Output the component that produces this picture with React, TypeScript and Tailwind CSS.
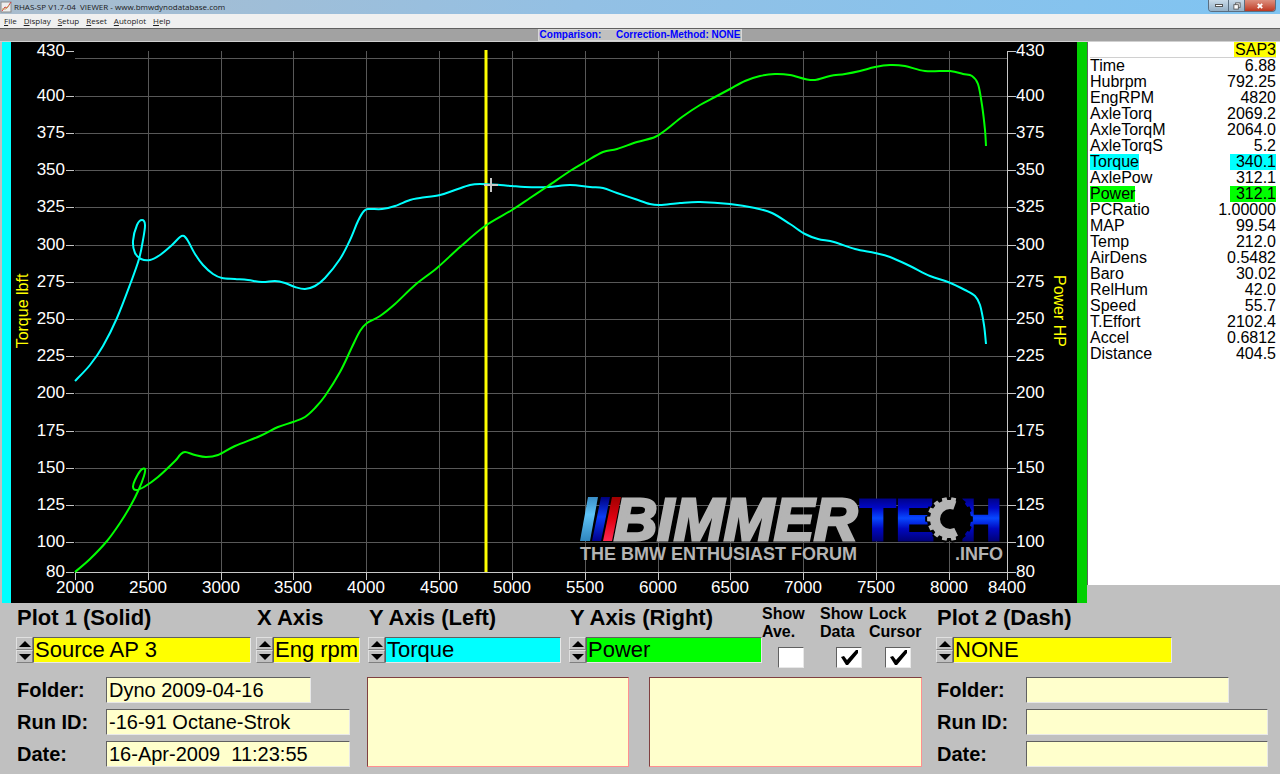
import { useId } from 'react';
import type { ReactNode } from 'react';
import clsx from 'clsx';

type Point = [number, number];

const PLOT = { left: 75, right: 1007, top: 51, bottom: 572 };
const RPM = { min: 2000, max: 8400 };
const LOAD = { min: 80, max: 430 };

const rpmTicks = [2000, 2500, 3000, 3500, 4000, 4500, 5000, 5500, 6000, 6500, 7000, 7500, 8000, 8400];
const loadTicks = [430, 400, 375, 350, 325, 300, 275, 250, 225, 200, 175, 150, 125, 100, 80];
const gridLoads = [425, 400, 375, 350, 325, 300, 275, 250, 225, 200, 175, 150, 125, 100];

const xOf = (rpm: number) =>
    Math.round(PLOT.left + ((rpm - RPM.min) * (PLOT.right - PLOT.left)) / (RPM.max - RPM.min));
const yOf = (load: number) =>
    Math.round(PLOT.bottom - ((load - LOAD.min) * (PLOT.bottom - PLOT.top)) / (LOAD.max - LOAD.min));

const torque: Point[] = [
    [75, 381], [90, 365], [103, 346], [117, 318], [131, 282], [139, 259], [143, 240], [145, 225], [142, 220],
    [137, 225], [133, 241], [135, 253], [141, 259], [150, 260], [160, 255], [172, 245], [180, 237], [184, 236],
    [188, 241], [195, 254], [203, 265], [213, 274], [222, 278], [235, 279], [248, 280], [262, 282], [275, 281],
    [285, 283], [295, 287], [305, 289], [315, 286], [325, 278], [340, 259], [350, 240], [358, 221], [364, 211],
    [369, 209], [382, 209], [395, 206], [410, 200], [420, 198], [440, 195], [455, 190], [470, 185], [480, 184],
    [500, 185], [512, 186], [525, 187], [548, 187], [570, 185], [590, 187], [603, 188], [617, 193], [635, 199],
    [650, 204], [660, 205], [680, 203], [700, 202], [730, 204], [755, 208], [772, 213], [790, 224], [805, 234],
    [818, 239], [834, 242], [855, 249], [875, 253], [890, 257], [910, 266], [930, 276], [948, 282], [965, 290],
    [975, 296], [980, 305], [984, 325], [986, 344],
];

const power: Point[] = [
    [75, 572], [90, 559], [107, 541], [120, 523], [131, 505], [139, 489], [144, 476], [145, 469], [141, 470],
    [135, 480], [133, 487], [136, 490], [144, 487], [158, 477], [175, 461], [180, 455], [185, 452], [195, 455],
    [206, 457], [218, 455], [235, 446], [260, 436], [278, 427], [293, 422], [305, 417], [315, 408], [325, 396],
    [340, 372], [352, 347], [360, 331], [367, 323], [380, 316], [395, 304], [415, 285], [437, 268], [460, 247],
    [485, 226], [512, 210], [530, 198], [548, 186], [570, 171], [585, 162], [603, 152], [617, 149], [637, 142],
    [655, 137], [667, 129], [682, 117], [700, 105], [715, 97], [730, 89], [745, 81], [760, 76], [775, 74],
    [790, 75], [805, 79], [815, 80], [830, 76], [845, 74], [860, 71], [875, 67], [890, 65], [905, 66], [925, 71],
    [950, 71], [963, 74], [972, 76], [978, 84], [982, 105], [985, 130], [986, 146],
];

const readings = [
    { name: 'Time', value: '6.88' },
    { name: 'Hubrpm', value: '792.25' },
    { name: 'EngRPM', value: '4820' },
    { name: 'AxleTorq', value: '2069.2' },
    { name: 'AxleTorqM', value: '2064.0' },
    { name: 'AxleTorqS', value: '5.2' },
    { name: 'Torque', value: '340.1', mark: 'bg-[#00ffff]' },
    { name: 'AxlePow', value: '312.1' },
    { name: 'Power', value: '312.1', mark: 'bg-[#00ff00]' },
    { name: 'PCRatio', value: '1.00000' },
    { name: 'MAP', value: '99.54' },
    { name: 'Temp', value: '212.0' },
    { name: 'AirDens', value: '0.5482' },
    { name: 'Baro', value: '30.02' },
    { name: 'RelHum', value: '42.0' },
    { name: 'Speed', value: '55.7' },
    { name: 'T.Effort', value: '2102.4' },
    { name: 'Accel', value: '0.6812' },
    { name: 'Distance', value: '404.5' },
];

// Catmull-Rom through the samples
const smooth = (pts: Point[]) => {
    let d = `M${pts[0][0]} ${pts[0][1]}`;
    for (let i = 0; i < pts.length - 1; i++) {
        const p0 = pts[i - 1] ?? pts[i];
        const p1 = pts[i];
        const p2 = pts[i + 1];
        const p3 = pts[i + 2] ?? p2;
        d += `C${p1[0] + (p2[0] - p0[0]) / 6} ${p1[1] + (p2[1] - p0[1]) / 6} ${p2[0] - (p3[0] - p1[0]) / 6} ${p2[1] - (p3[1] - p1[1]) / 6} ${p2[0]} ${p2[1]}`;
    }
    return d;
};

const gear = (cx: number, cy: number, outer: number, root: number, teeth: number) => {
    const pts: string[] = [];
    const step = (Math.PI * 2) / teeth;
    for (let i = 0; i < teeth; i++) {
        const a = i * step;
        const corners: Point[] = [[-0.3, root], [-0.24, outer], [0.24, outer], [0.3, root]];
        corners.forEach(([f, r]) => {
            pts.push(`${cx + r * Math.cos(a + f * step)},${cy + r * Math.sin(a + f * step)}`);
        });
    }
    return pts.join(' ');
};

const Logo = () => (
    <g>
        <defs>
            <linearGradient id="stripeSky" x1="0" y1="0" x2="0" y2="1">
                <stop offset="0" stopColor="#3a8fc8" />
                <stop offset="0.4" stopColor="#5fc4f8" />
                <stop offset="1" stopColor="#2f86be" />
            </linearGradient>
            <linearGradient id="stripeBlue" x1="0" y1="0" x2="0" y2="1">
                <stop offset="0" stopColor="#000080" />
                <stop offset="0.45" stopColor="#0a3cf5" />
                <stop offset="1" stopColor="#00008c" />
            </linearGradient>
            <linearGradient id="stripeRed" x1="0" y1="0" x2="0" y2="1">
                <stop offset="0" stopColor="#a00000" />
                <stop offset="0.5" stopColor="#e00010" />
                <stop offset="1" stopColor="#ff2850" />
            </linearGradient>
            <linearGradient id="techBlue" gradientUnits="userSpaceOnUse" x1="0" y1="497" x2="0" y2="541">
                <stop offset="0" stopColor="#000080" />
                <stop offset="0.25" stopColor="#0008c8" />
                <stop offset="0.48" stopColor="#0848ff" />
                <stop offset="0.72" stopColor="#0008c0" />
                <stop offset="1" stopColor="#000078" />
            </linearGradient>
            <mask id="openGear" maskUnits="userSpaceOnUse" x="920" y="490" width="60" height="60">
                <rect x="920" y="490" width="60" height="60" fill="#fff" />
                <circle cx="950" cy="519" r="10" fill="#000" />
                <polygon points="950,519 959,494 980,494 980,544 962,544" fill="#000" />
            </mask>
        </defs>
        <polygon points="588,497 598,497 590,541 580,541" fill="url(#stripeSky)" />
        <polygon points="601,497 610,497 601,541 592,541" fill="url(#stripeBlue)" />
        <polygon points="612,497 621,497 612,541 603,541" fill="url(#stripeRed)" />
        <text
            x="614"
            y="540"
            fontSize="60"
            fontWeight="bold"
            fontStyle="italic"
            fill="#b4b4b4"
            stroke="#b4b4b4"
            strokeWidth="3"
        >
            BIMMER
        </text>
        <g fontSize="58" fontWeight="bold" fill="url(#techBlue)" stroke="url(#techBlue)" strokeWidth="3">
            <text x="860" y="540">TE</text>
            <text x="960" y="540">H</text>
        </g>
        <polygon points={gear(949, 519, 24, 22, 14)} fill="#000" />
        <polygon points={gear(949, 519, 22, 19, 14)} fill="#b4b4b4" mask="url(#openGear)" />
        <g fontSize="18" fontWeight="bold" fill="#b4b4b4">
            <text x="580" y="560">THE BMW ENTHUSIAST FORUM</text>
            <text x="1003" y="560" textAnchor="end">.INFO</text>
        </g>
    </g>
);

const DynoChart = () => (
    <svg viewBox="11 42 1066 561" className="block h-auto min-w-0 flex-1 bg-black" role="img" aria-label="Torque and power against engine rpm">
        <g stroke="#585858" shapeRendering="crispEdges">
            {gridLoads.map((v) => (
                <line key={v} x1={PLOT.left} x2={PLOT.right} y1={yOf(v)} y2={yOf(v)} />
            ))}
            {rpmTicks.slice(1, -1).map((v) => (
                <line key={v} x1={xOf(v)} x2={xOf(v)} y1={PLOT.top} y2={PLOT.bottom} />
            ))}
        </g>
        <g stroke="#c8c8c8" shapeRendering="crispEdges">
            <line x1={PLOT.left} x2={PLOT.right} y1={PLOT.bottom} y2={PLOT.bottom} />
            <line x1={PLOT.right} x2={PLOT.right} y1={PLOT.top} y2={PLOT.bottom} />
            {loadTicks.map((v) => (
                <g key={v}>
                    <line x1="66" x2="74" y1={yOf(v)} y2={yOf(v)} />
                    <line x1="1007" x2="1016" y1={yOf(v)} y2={yOf(v)} />
                </g>
            ))}
            {rpmTicks.map((v) => (
                <line key={v} x1={xOf(v)} x2={xOf(v)} y1="572" y2="580" />
            ))}
        </g>
        <g fill="#fff" fontSize="17">
            {loadTicks.map((v) => (
                <g key={v}>
                    <text x="65" y={yOf(v) + 5} textAnchor="end">{v}</text>
                    <text x="1016" y={yOf(v) + 5}>{v}</text>
                </g>
            ))}
            {rpmTicks.map((v) => (
                <text key={v} x={xOf(v)} y="593" textAnchor="middle">{v}</text>
            ))}
        </g>
        <g fill="#ffff00" fontSize="16" textAnchor="middle">
            <text transform="translate(28 311) rotate(-90)">Torque lbft</text>
            <text transform="translate(1054 311) rotate(90)">Power HP</text>
        </g>

        {/* Cursor */}
        <line x1="486" x2="486" y1="50" y2="572" stroke="#ffff00" strokeWidth="3" />

        <path d={smooth(torque)} fill="none" stroke="#00ffff" strokeWidth="2" />
        <path d={smooth(power)} fill="none" stroke="#00ff00" strokeWidth="2" />
        <path d="M484 185H498M491 178V192" stroke="#c8c8c8" strokeWidth="2" />
        <Logo />
    </svg>
);

const AppIcon = () => (
    <svg viewBox="0 0 12 12" className="size-3" aria-hidden="true">
        <rect x="1" y="1" width="10" height="10" fill="#eee" stroke="#8a8a8a" />
        <path d="M2 10 5 6 7 7 11 1" fill="none" stroke="#d04040" />
        <path d="M2 8 6 8 9 4" fill="none" stroke="#c8a060" />
    </svg>
);

const TitleBar = () => (
    <header className="flex h-3.5 items-center bg-linear-to-r from-[#a9bccd] via-[#93c0e4] via-45% to-[#7fc4f2] pr-1">
        <AppIcon />
        <h1 className="ml-0.5 flex-1 font-['Open_Sans',sans-serif] text-[8px] leading-3 whitespace-pre text-[#1a1a1a]">
            RHAS-SP V1.7-04  VIEWER - www.bmwdynodatabase.com
        </h1>
        <div className="flex h-3 self-start overflow-hidden rounded-b-sm border border-t-0 border-[#5a6e80]">
            <button aria-label="Minimize" className="flex w-5 items-center justify-center border-r border-[#5a6e80] bg-linear-to-b from-[#c9dbe9] to-[#95b0c6]">
                <span className="h-[3px] w-2 border border-[#555] bg-white" />
            </button>
            <button aria-label="Restore" className="flex w-4 items-center justify-center border-r border-[#5a6e80] bg-linear-to-b from-[#c9dbe9] to-[#95b0c6]">
                <svg viewBox="0 0 9 9" className="size-2">
                    <rect x="3" y="1" width="5" height="5" fill="#fff" stroke="#555" />
                    <rect x="1" y="3" width="5" height="5" fill="#fff" stroke="#555" />
                </svg>
            </button>
            <button aria-label="Close" className="flex w-[30px] items-center justify-center bg-linear-to-b from-[#dc8f7e] to-[#bd3620]">
                <svg viewBox="0 0 9 9" className="size-2">
                    <path d="M2 2 7 7M7 2 2 7" stroke="#fff" strokeWidth="2" />
                </svg>
            </button>
        </div>
    </header>
);

const MenuBar = () => (
    <nav className="flex h-3.5 items-center gap-[7px] bg-[#f0f0f0] px-1 font-['Open_Sans',sans-serif] text-[8px] leading-3 text-[#222]">
        {['File', 'Display', 'Setup', 'Reset', 'Autoplot', 'Help'].map((item) => (
            <button key={item}>
                <span className="underline">{item[0]}</span>
                {item.slice(1)}
            </button>
        ))}
    </nav>
);

const ReadingsTable = () => (
    <aside className="mb-[18px] w-[193px] shrink-0 border-l border-[#606060] bg-white pr-1 pl-0.5">
        <table className="w-full border-collapse text-[16px] leading-4 text-black">
            <thead>
                <tr className="border-b border-[#d0d0d0]">
                    <th aria-label="Channel" />
                    <th className="p-0 text-right leading-[15px] font-normal">
                        <span className="ml-auto block w-fit bg-[#ffff00] pl-px">SAP3</span>
                    </th>
                </tr>
            </thead>
            <tbody>
                {readings.map((r) => (
                    <tr key={r.name} className="h-4">
                        <th className="p-0 text-left font-normal">
                            <span className={clsx('block w-fit', r.mark)}>{r.name}</span>
                        </th>
                        <td className="p-0">
                            <span className={clsx('ml-auto block w-fit', r.mark, r.mark && 'pl-1.5')}>{r.value}</span>
                        </td>
                    </tr>
                ))}
            </tbody>
        </table>
    </aside>
);

const bevel = 'border border-t-[#606060] border-l-[#606060] border-r-[#e8e8e8] border-b-[#e8e8e8]';

const RingControl = ({ label, value, color, width }: { label: string; value: string; color: string; width: string }) => {
    const id = useId();
    return (
        <div className="min-w-0">
            <label htmlFor={id} className="block h-[34px] pl-px text-[22px] leading-[30px] font-bold whitespace-nowrap">
                {label}
            </label>
            <div className={clsx('flex h-[26px]', width)}>
                <div className="flex w-[17px] shrink-0 flex-col">
                    {['up', 'down'].map((dir) => (
                        <button
                            key={dir}
                            aria-label={`${label} ${dir}`}
                            className="flex flex-1 items-center justify-center border border-t-[#e0e0e0] border-r-[#808080] border-b-[#808080] border-l-[#e0e0e0] bg-[#c0c0c0]"
                        >
                            <svg viewBox="0 0 12 6" className="h-1.5 w-3">
                                <polygon points={dir === 'up' ? '6,0 12,6 0,6' : '0,0 12,0 6,6'} />
                            </svg>
                        </button>
                    ))}
                </div>
                <input
                    id={id}
                    defaultValue={value}
                    className={clsx('min-w-0 flex-1 rounded-none pl-px text-[22px] leading-6', bevel, color)}
                />
            </div>
        </div>
    );
};

const CheckControl = ({ label, checked = false }: { label: ReactNode; checked?: boolean }) => (
    <label className="flex min-w-0 flex-col gap-1.5 pt-0.5 text-[16px] leading-[18px] font-bold whitespace-nowrap">
        <span>{label}</span>
        <span className="relative ml-4 h-[21px] w-[26px]">
            <input
                type="checkbox"
                defaultChecked={checked}
                className={clsx('peer block size-full appearance-none bg-white', bevel)}
            />
            <svg viewBox="0 0 26 21" className="pointer-events-none absolute inset-0 hidden peer-checked:block">
                <path d="M5 10 8 9 11 13 20 3 22 3 22 6 12 18 10 18Z" />
            </svg>
        </span>
    </label>
);

const RunField = ({ label, value = '', width }: { label: string; value?: string; width: string }) => {
    const id = useId();
    return (
        <div className="flex h-[26px] items-center">
            <label htmlFor={id} className="w-[90px] shrink-0 pl-px text-[20px] leading-6 font-bold whitespace-nowrap">
                {label}
            </label>
            <input
                id={id}
                defaultValue={value}
                className={clsx('h-[26px] min-w-0 rounded-none bg-[#ffffcc] pl-0.5 text-[20px] leading-5', bevel, width)}
            />
        </div>
    );
};

const notesBox =
    'block h-full min-w-0 resize-none border border-t-[#804040] border-l-[#804040] border-r-[#ff9090] border-b-[#ff9090] bg-[#ffffcc]';

const ControlPanel = () => (
    <section className="border-b border-[#707070] pr-3 pb-[7px] pl-4 text-black">
        <div className="grid grid-cols-[240fr_112fr_201fr_193fr_58fr_49fr_67fr_332fr]">
            <RingControl label="Plot 1 (Solid)" value="Source AP 3" color="bg-[#ffff00]" width="w-[98%]" />
            <RingControl label="X Axis" value="Eng rpm" color="bg-[#ffff00]" width="w-[93%]" />
            <RingControl label="Y Axis (Left)" value="Torque" color="bg-[#00ffff]" width="w-[96%]" />
            <RingControl label="Y Axis (Right)" value="Power" color="bg-[#00ff00]" width="w-full" />
            <CheckControl label={<>Show<br />Ave.</>} />
            <CheckControl label={<>Show<br />Data</>} checked />
            <CheckControl label={<>Lock<br />Cursor</>} checked />
            <RingControl label="Plot 2 (Dash)" value="NONE" color="bg-[#ffff00]" width="w-[71%]" />
        </div>
        <div className="mt-[9px] grid grid-cols-[351fr_282fr_287fr_332fr]">
            <div className="flex min-w-0 flex-col gap-1.5">
                <RunField label="Folder:" value="Dyno 2009-04-16" width="w-[205px]" />
                <RunField label="Run ID:" value="-16-91 Octane-Strok" width="w-[244px]" />
                <RunField label="Date:" value="16-Apr-2009  11:23:55" width="w-[244px]" />
            </div>
            <textarea aria-label="Plot 1 notes" className={clsx('w-[93%]', notesBox)} />
            <textarea aria-label="Plot 2 notes" className={clsx('w-[95%]', notesBox)} />
            <div className="flex min-w-0 flex-col gap-1.5">
                <RunField label="Folder:" width="w-[203px]" />
                <RunField label="Run ID:" width="flex-1" />
                <RunField label="Date:" width="flex-1" />
            </div>
        </div>
    </section>
);

export default function App() {
    return (
        <div className="w-full bg-[#c0c0c0] font-['Liberation_Sans',Arial,sans-serif]">
            <TitleBar />
            <MenuBar />
            <div className="flex h-3.5 items-center justify-center border-t border-b border-t-[#606060] border-b-[#d0d0d0] bg-[#a2a2a2]">
                <p className="h-3 border border-[#d8d8d8] bg-[#c0c0c0] px-px text-[10px] leading-[10px] font-bold text-[#0000ff]">
                    <span className="mr-3">Comparison:</span> <span>Correction-Method: NONE</span>
                </p>
            </div>
            <main className="flex items-stretch pl-0.5">
                <div className="w-[9px] shrink-0 bg-[#00ffff]" />
                <DynoChart />
                <div className="w-2.5 shrink-0 bg-[#00d000]" />
                <ReadingsTable />
            </main>
            <ControlPanel />
        </div>
    );
}
